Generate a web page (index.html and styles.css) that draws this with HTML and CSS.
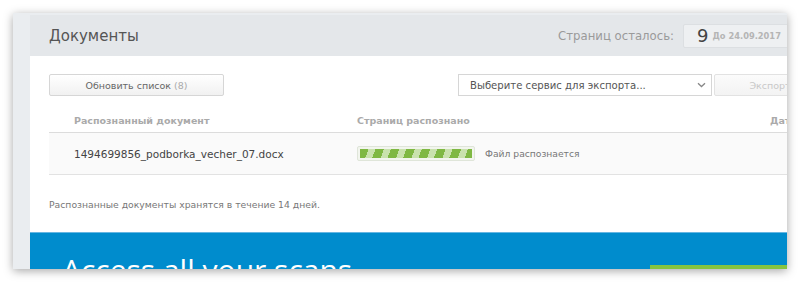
FILE: index.html
```html
<!DOCTYPE html>
<html lang="ru">
<head>
<meta charset="utf-8">
<title>Документы</title>
<link rel="stylesheet" href="styles.css">
</head>
<body>
<div class="frame">
  <div class="strip"></div>
  <div class="main">
    <div class="header">
      <h1 class="title">Документы</h1>
      <div class="quota">
        <span class="quota-label">Страниц осталось:</span>
        <span class="quota-box"><span class="quota-num">9</span><span class="quota-date">До 24.09.2017</span></span>
      </div>
    </div>
    <div class="content">
      <div class="toolbar">
        <button class="btn refresh">Обновить список <span class="count">(8)</span></button>
        <div class="export">
          <div class="select"><span>Выберите сервис для экспорта...</span>
            <svg class="chev" width="9" height="6" viewBox="0 0 9 6"><path d="M1 1.2 L4.5 4.5 L8 1.2" fill="none" stroke="#888" stroke-width="1.3"/></svg>
          </div>
          <button class="btn export-btn">Экспорт</button>
        </div>
      </div>
      <div class="table">
        <div class="thead">
          <div class="c1">Распознанный документ</div>
          <div class="c2">Страниц распознано</div>
          <div class="c3">Дата</div>
        </div>
        <div class="trow">
          <div class="c1 fname">1494699856_podborka_vecher_07.docx</div>
          <div class="c2 status"><span class="bar"><span class="bar-fill"></span></span><span class="status-text">Файл распознается</span></div>
          <div class="c3"></div>
        </div>
      </div>
      <p class="note">Распознанные документы хранятся в течение 14 дней.</p>
    </div>
    <div class="promo">
      <div class="promo-title">Access all your scans</div>
      <div class="promo-btn"></div>
    </div>
  </div>
</div>
</body>
</html>
```
FILE: styles.css
```css
html, body {
  margin: 0;
  padding: 0;
  background: #ffffff;
  font-family: "DejaVu Sans", Verdana, sans-serif;
}
body {
  padding: 13px;
  height: 282px;
  box-sizing: border-box;
}
.frame {
  width: 774px;
  height: 256px;
  display: flex;
  overflow: hidden;
  background: #eaedf0;
  box-shadow: 0 2px 9px rgba(0, 0, 0, 0.35);
  padding-top: 2px;
  box-sizing: border-box;
}
.strip {
  flex: 0 0 17px;
}
.main {
  flex: 0 0 815px;
  background: #fff;
  display: flex;
  flex-direction: column;
}
.main > * {
  flex-shrink: 0;
}
.header {
  height: 41px;
  background: #e4e7ea;
  display: flex;
  align-items: center;
  justify-content: space-between;
  padding: 0 53px 0 19px;
  box-sizing: border-box;
}
.title {
  margin: 0;
  font-weight: normal;
  font-size: 15px;
  color: #555;
}
.quota {
  display: flex;
  align-items: center;
  gap: 9px;
  white-space: nowrap;
}
.quota-label {
  font-size: 11.7px;
  color: #9a9a9a;
}
.quota-box {
  display: flex;
  align-items: center;
  gap: 4px;
  height: 22px;
  padding: 0 0 0 13px;
  background: #eef0f2;
  border: 1px solid #dcdfe2;
  border-radius: 2px;
  width: 94px;
}
.quota-num {
  font-size: 18px;
  color: #444;
}
.quota-date {
  font-size: 8.3px;
  font-weight: bold;
  color: #b5b5b5;
}
.content {
  padding: 18px 19px 0 19px;
}
.toolbar {
  display: flex;
  justify-content: space-between;
  height: 22px;
}
.btn {
  font-family: inherit;
  border: 1px solid #d6d6d6;
  background: linear-gradient(#ffffff, #f1f1f1);
  border-radius: 2px;
  font-size: 9.5px;
  color: #666;
  height: 22px;
  padding: 0;
}
.refresh {
  width: 175px;
}
.count {
  color: #aaa;
}
.export {
  display: flex;
  gap: 2px;
}
.select {
  width: 254px;
  height: 22px;
  box-sizing: border-box;
  border: 1px solid #d6d6d6;
  background: #fff;
  display: flex;
  align-items: center;
  justify-content: space-between;
  padding: 0 5px 0 11px;
  font-size: 10.1px;
  color: #555;
}
.export-btn {
  width: 112px;
  color: #c8c8c8;
  background: linear-gradient(#fbfbfb, #f3f3f3);
  border-color: #e2e2e2;
}
.table {
  margin-top: 12px;
}
.thead, .trow {
  display: grid;
  grid-template-columns: 308px 413px 1fr;
}
.thead {
  height: 24px;
  align-items: center;
  border-bottom: 1px solid #dcdcdc;
  font-size: 9.5px;
  font-weight: bold;
  color: #aaa;
}
.c1 {
  padding-left: 25px;
}
.trow {
  height: 41px;
  align-items: center;
  background: #fafafa;
  border-bottom: 1px solid #e2e2e2;
}
.fname {
  font-size: 10.5px;
  color: #444;
}
.status {
  display: flex;
  align-items: center;
  gap: 10px;
}
.bar {
  display: block;
  width: 118px;
  height: 15px;
  box-sizing: border-box;
  border: 1px solid #dfe5d9;
  background: #f2f5ee;
  padding: 2px;
  border-radius: 2px;
}
.bar-fill {
  display: block;
  height: 100%;
  background: repeating-linear-gradient(110deg, #7fb843 0 8px, #c9e2ad 8px 14.5px);
}
.status-text {
  font-size: 9.2px;
  color: #777;
}
.note {
  margin: 24px 0 0 0;
  font-size: 9.25px;
  color: #777;
  height: 33px;
}
.promo {
  background: #008ccd;
  border-top: 1px solid #66b6e2;
  position: relative;
  padding: 17px 0 0 32px;
  height: 80px;
}
.promo-title {
  color: #fff;
  font-size: 30px;
  line-height: 40px;
  font-family: "Open Sans", "DejaVu Sans", sans-serif;
}
.promo-btn {
  position: absolute;
  left: 620px;
  top: 32px;
  width: 170px;
  height: 40px;
  background: #86c440;
}
```
